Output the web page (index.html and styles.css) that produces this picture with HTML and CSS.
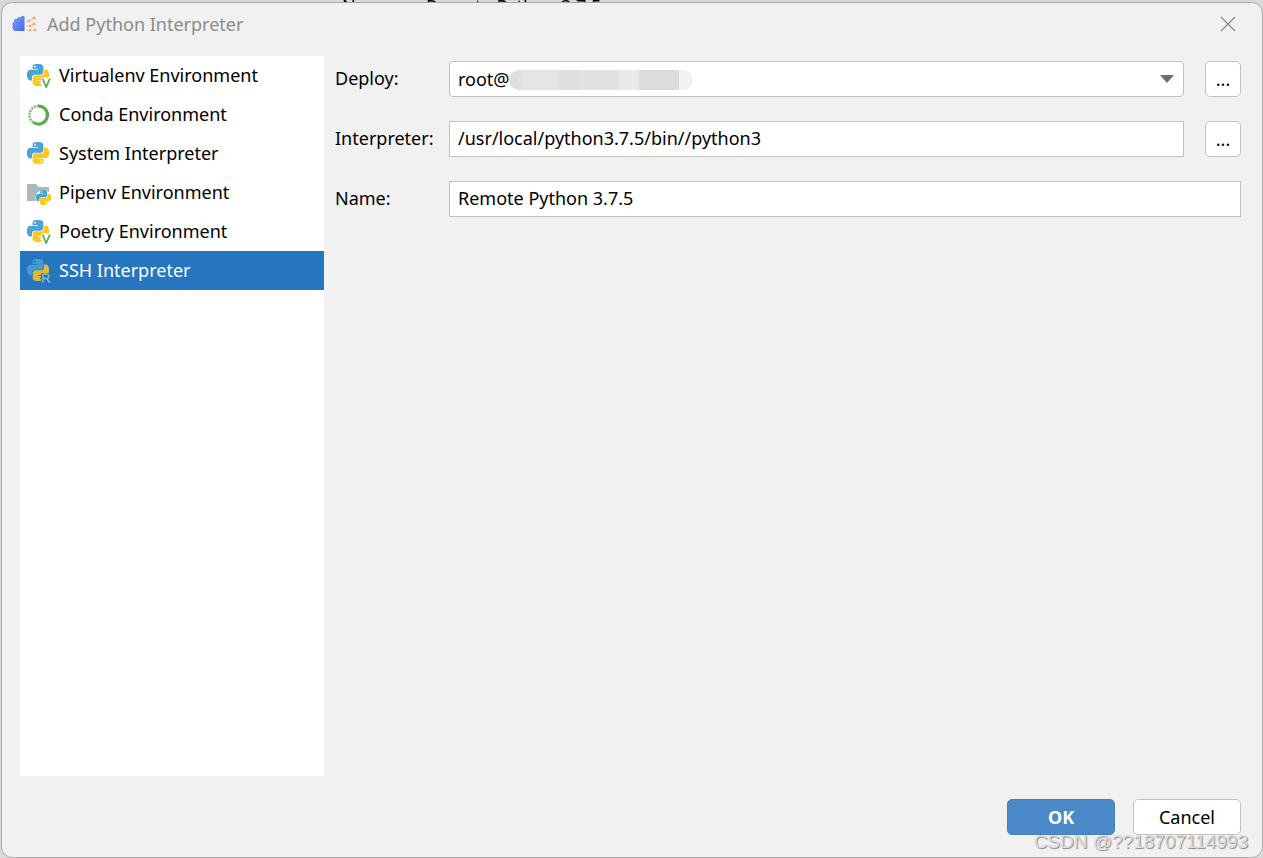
FILE: index.html
```html
<!DOCTYPE html>
<html lang="en">
<head>
<meta charset="utf-8">
<title>Add Python Interpreter</title>
<link rel="stylesheet" href="styles.css">
</head>
<body>
<svg class="defs" aria-hidden="true">
  <defs>
    <path id="half" d="M14.25.18l.9.2.73.26.59.3.45.32.34.34.25.34.16.33.1.3.04.26.02.2-.01.13V8.5l-.05.63-.13.55-.21.46-.26.38-.3.31-.33.25-.35.19-.35.14-.33.1-.3.07-.26.04-.21.02H8.77l-.69.05-.59.14-.5.22-.41.27-.33.32-.27.35-.2.36-.15.37-.1.35-.07.32-.04.27-.02.21v3.06H3.17l-.21-.03-.28-.07-.32-.12-.35-.18-.36-.26-.36-.36-.35-.46-.32-.59-.28-.73-.21-.88-.14-1.05-.05-1.23.06-1.22.16-1.04.24-.87.32-.71.36-.57.4-.44.42-.33.42-.24.4-.16.36-.1.32-.05.24-.01h.16l.06.01h8.16v-.83H6.18l-.01-2.75-.02-.37.05-.34.11-.31.17-.28.25-.26.31-.23.38-.2.44-.18.51-.15.58-.12.64-.1.71-.06.77-.04.84-.02 1.27.05zm-6.3 1.98l-.23.33-.08.41.08.41.23.34.33.22.41.09.41-.09.33-.22.23-.34.08-.41-.08-.41-.23-.33-.33-.22-.41-.09-.41.09z"/>
    <linearGradient id="blue" x1="0" y1="0" x2="1" y2="1"><stop offset="0" stop-color="#7ba0f5"/><stop offset="1" stop-color="#4169ea"/></linearGradient>
  </defs>
  <symbol id="snake" viewBox="0 0 24 24">
    <use href="#half" fill="#4aa3d4"/>
    <use href="#half" transform="rotate(180 12 12)" fill="#fcc91c"/>
  </symbol>
  <symbol id="virtual" viewBox="0 0 24 24">
    <use href="#snake" width="22" height="22"/>
    <path d="M14 13.500h10V24h-9z" fill="#fff"/>
    <path d="M15.500 14.500l3.700 8.500 3.700-8.500" fill="none" stroke="#5fad4c" stroke-width="1.800"/>
  </symbol>
</svg>
<div class="backdrop" aria-hidden="true"><span class="backdrop-label">Name:</span><span>Remote Python 3.7.5</span></div>
<main class="dialog">
  <header class="titlebar">
    <svg class="app-icon" viewBox="0 0 26 18" aria-hidden="true">
      <path d="M12.500 1.500V16H3.500A2.500 2.500 0 0 1 1 13.500a2 2 0 0 1 0-3 2 2 0 0 1 1-3.500 2.300 2.300 0 0 1 3-3 2.300 2.300 0 0 1 3.500-1.500 2.500 2.500 0 0 1 4-1z" fill="url(#blue)"/>
      <path d="M14 7l4-2 4-2M14 11h4l4-2M14 15h9" fill="none" stroke="#f8c296" stroke-width="1.200"/>
      <g fill="#f5a865"><circle cx="17" cy="6" r="1.300"/><circle cx="22" cy="3" r="1.500"/><circle cx="18" cy="11" r="1.300"/><circle cx="22" cy="9" r="1.500"/><circle cx="18" cy="15" r="1.200"/><circle cx="23" cy="15" r="1.300"/></g>
    </svg>
    <h1 class="title">Add Python Interpreter</h1>
    <button class="close" type="button" aria-label="Close"><svg viewBox="0 0 16 16"><path d="M1 1l14 14M15 1L1 15" stroke="#8c8c8c" stroke-width="1.300"/></svg></button>
  </header>
  <form class="content">
    <nav class="types" aria-label="Interpreter type">
      <button class="type" type="button"><svg viewBox="0 0 24 24"><use href="#virtual"/></svg>Virtualenv Environment</button>
      <button class="type" type="button"><svg viewBox="0 0 24 24"><path d="M11 3a9 9 0 1 1-4.500 16.500" fill="none" stroke="#5fa850" stroke-width="3.200"/><path d="M6.500 19.500A9 9 0 0 1 11 3" fill="none" stroke="#7cc06d" stroke-width="2.600" stroke-dasharray="2 1"/></svg>Conda Environment</button>
      <button class="type" type="button"><svg viewBox="0 0 24 24"><use href="#snake" width="22" height="22"/></svg>System Interpreter</button>
      <button class="type" type="button"><svg viewBox="0 0 24 24"><path d="M0 3h9l3 3h10v14H0z" fill="#adb7be"/><circle cx="16.500" cy="17" r="8" fill="#fff"/><use href="#snake" x="9" y="9" width="15" height="15"/></svg>Pipenv Environment</button>
      <button class="type" type="button"><svg viewBox="0 0 24 24"><use href="#virtual"/></svg>Poetry Environment</button>
      <button class="type selected" type="button" aria-current="true"><svg viewBox="0 0 24 24"><use href="#snake" width="22" height="22" opacity=".85"/><path d="M14 14h10v10H14z" fill="#2675bf"/><path d="M16 23.500v-8.500h3.500a2.300 2.300 0 0 1 0 4.600H16m3.500 0l3.500 4" fill="none" stroke="#8db5d9" stroke-width="1.500"/></svg>SSH Interpreter</button>
    </nav>
    <div class="fields">
      <label for="deploy">Deploy:</label>
      <div class="combo">
        <select id="deploy"><option>root@</option></select>
        <span class="mosaic" aria-hidden="true"></span>
        <svg class="arrow" viewBox="0 0 14 8" aria-hidden="true"><path d="M0 0h14L7 8z" fill="#6e6e6e"/></svg>
      </div>
      <button class="browse" type="button" aria-label="Browse deployments">...</button>
      <label for="interpreter">Interpreter:</label>
      <input id="interpreter" type="text" value="/usr/local/python3.7.5/bin//python3">
      <button class="browse" type="button" aria-label="Browse interpreters">...</button>
      <label for="name">Name:</label>
      <input id="name" class="wide" type="text" value="Remote Python 3.7.5">
    </div>
  </form>
  <footer class="actions">
    <button class="action primary" type="button">OK</button>
    <button class="action" type="button">Cancel</button>
  </footer>
</main>
<div class="watermark">CSDN @??18707114993</div>
</body>
</html>
```
FILE: styles.css
```css
* { box-sizing: border-box; }
body {
  margin: 0;
  height: 100vh;
  padding-left: 1px;
  display: flex;
  flex-direction: column;
  background: #d6dade;
  font: 18px/24px "Noto Sans", "Open Sans", sans-serif;
  color: #000;
  overflow: hidden;
}
button, input, select { font: inherit; color: inherit; }
.defs { position: absolute; width: 0; height: 0; }
.backdrop {
  display: flex;
  height: 2px;
  padding-left: 341px;
  line-height: 12px;
  overflow: hidden;
}
.backdrop-label { width: 84px; }
.dialog {
  flex: 1;
  display: flex;
  flex-direction: column;
  background: #f1f1f1;
  border: 1px solid #a8aaac;
  border-radius: 11px;
}
.titlebar {
  display: flex;
  align-items: center;
  height: 42px;
  padding: 0 26px 0 10px;
}
.app-icon { width: 26px; height: 18px; }
.title { flex: 1; margin: 0 0 0 9px; font-size: 18px; font-weight: 400; color: #8c8c8c; }
.close { display: flex; padding: 0; border: 0; background: none; }
.close svg { width: 16px; height: 16px; }
.content {
  flex: 1;
  display: flex;
  gap: 11px;
  margin-top: 11px;
  padding: 0 21px 0 18px;
}
.types { width: 304px; background: #fff; }
.type {
  display: flex;
  align-items: center;
  gap: 8px;
  width: 100%;
  height: 39px;
  padding: 0 7px 2px;
  border: 0;
  background: none;
  text-align: left;
}
.type svg { width: 24px; height: 24px; margin-top: 2px; }
.selected { background: #2675bf; color: #fff; }
.fields {
  flex: 1;
  display: grid;
  grid-template-columns: 93px 1fr 36px;
  column-gap: 21px;
  row-gap: 24px;
  align-content: start;
  align-items: center;
  padding-top: 5px;
}
.fields label { padding-bottom: 2px; white-space: nowrap; }
.fields input, .fields select {
  width: 100%;
  height: 36px;
  padding: 0 8px;
  border: 1px solid #c2c2c2;
  border-radius: 0;
  background: #fff;
}
.fields input { padding-bottom: 2px; }
.fields .wide { grid-column: span 2; }
.fields select { display: block; appearance: none; border-radius: 4px; }
.combo { position: relative; }
.mosaic {
  position: absolute;
  left: 60px;
  top: 9px;
  width: 184px;
  height: 20px;
  border-radius: 10px;
  background: linear-gradient(90deg, #dfdfdf 12px, #e5e5e4 12px 50px, #dededc 50px 70px, #e2e2e0 70px 110px, #e9e9e8 110px 130px, #dcdcda 130px 170px, #f2f2f2 170px);
}
.arrow { position: absolute; right: 10px; top: 14px; width: 14px; height: 8px; pointer-events: none; }
.browse {
  height: 36px;
  padding: 0;
  border: 1px solid #c2c2c2;
  border-radius: 5px;
  background: #fff;
}
.actions {
  display: flex;
  justify-content: flex-end;
  gap: 18px;
  padding: 23px 21px 22px;
}
.action {
  width: 108px;
  height: 36px;
  padding: 0;
  border: 1px solid #c2c2c2;
  border-radius: 5px;
  background: #fff;
}
.primary { border-color: #4580bd; background: #4c89c8; color: #fff; font-weight: 700; }
.watermark {
  position: absolute;
  right: 15px;
  bottom: 5px;
  font: 19px/22px "Liberation Sans", Arial, sans-serif;
  color: #dcdcdc;
  text-shadow: 1px 1px 1px #888;
}
```
